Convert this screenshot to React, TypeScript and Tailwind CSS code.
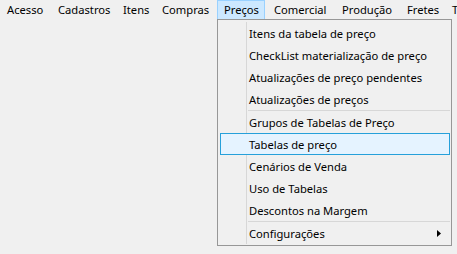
import { ReactNode } from "react";

type BarItem = { label: string; width: string; pad: string; open?: boolean };

const barItems: BarItem[] = [
  { label: "Acesso", width: "w-[51px]", pad: "pl-[6px]" },
  { label: "Cadastros", width: "w-[65px]", pad: "pl-[6px]" },
  { label: "Itens", width: "w-[39px]", pad: "pl-[6px]" },
  { label: "Compras", width: "w-[62px]", pad: "pl-[6px]" },
  { label: "Preços", width: "w-[48px]", pad: "pl-[6px]", open: true },
  { label: "Comercial", width: "w-[69px]", pad: "pl-[8px]" },
  { label: "Produção", width: "w-[66px]", pad: "pl-[7px]" },
  { label: "Fretes", width: "w-[45px]", pad: "pl-[6px]" },
  { label: "T", width: "w-[12px]", pad: "pl-[6px]" },
];

type Entry = { label: string; selected?: boolean; submenu?: boolean } | "sep";

const entries: Entry[] = [
  { label: "Itens da tabela de preço" },
  { label: "CheckList materialização de preço" },
  { label: "Atualizações de preço pendentes" },
  { label: "Atualizações de preços" },
  "sep",
  { label: "Grupos de Tabelas de Preço" },
  { label: "Tabelas de preço", selected: true },
  { label: "Cenários de Venda" },
  { label: "Uso de Tabelas" },
  { label: "Descontos na Margem" },
  "sep",
  { label: "Configurações", submenu: true },
];

function MenuRow({ children, selected, submenu }: { children: ReactNode; selected?: boolean; submenu?: boolean }) {
  return (
    <div
      className={
        "relative z-10 ml-[2px] mr-[1px] flex h-[22px] items-center border pl-[28px] pt-px " +
        (selected ? "border-[#26A0DA] bg-[#E5F3FF]" : "border-transparent")
      }
    >
      <span className="leading-none">{children}</span>
      {submenu && (
        <svg className="absolute right-[8px] top-[7px]" width="4" height="7" viewBox="0 0 4 7">
          <path d="M0 0 L4 3.5 L0 7 Z" fill="#000" />
        </svg>
      )}
    </div>
  );
}

export default function App() {
  return (
    <div
      className="relative h-[254px] w-[457px] overflow-hidden bg-[#F0F0F0] text-[11.2px] text-black"
      style={{ fontFamily: '"Noto Sans", "Segoe UI", sans-serif' }}
    >
      {/* Menu bar */}
      <div className="flex h-[19px] whitespace-nowrap">
        {barItems.map((item) => (
          <div
            key={item.label}
            className={
              "flex h-full shrink-0 items-center border pt-px " +
              item.width +
              " " +
              item.pad +
              (item.open ? " border-[#99D1FF] border-b-0 bg-[#CCE8FF]" : " border-transparent")
            }
          >
            {item.label}
          </div>
        ))}
      </div>

      {/* Dropdown */}
      <div className="absolute left-[217px] top-[19px] w-[235px] border border-[#979797] bg-[#F0F0F0] pt-[2px] pb-[1px]">
        <div className="absolute bottom-[1px] left-[28px] top-[2px] w-px bg-[#D7D7D7]" />
        {entries.map((e, i) =>
          e === "sep" ? (
            <div key={i} className="relative z-10 ml-[30px] mr-[1px] h-px bg-[#D7D7D7]" />
          ) : (
            <MenuRow key={i} selected={e.selected} submenu={e.submenu}>
              {e.label}
            </MenuRow>
          )
        )}
      </div>
    </div>
  );
}
